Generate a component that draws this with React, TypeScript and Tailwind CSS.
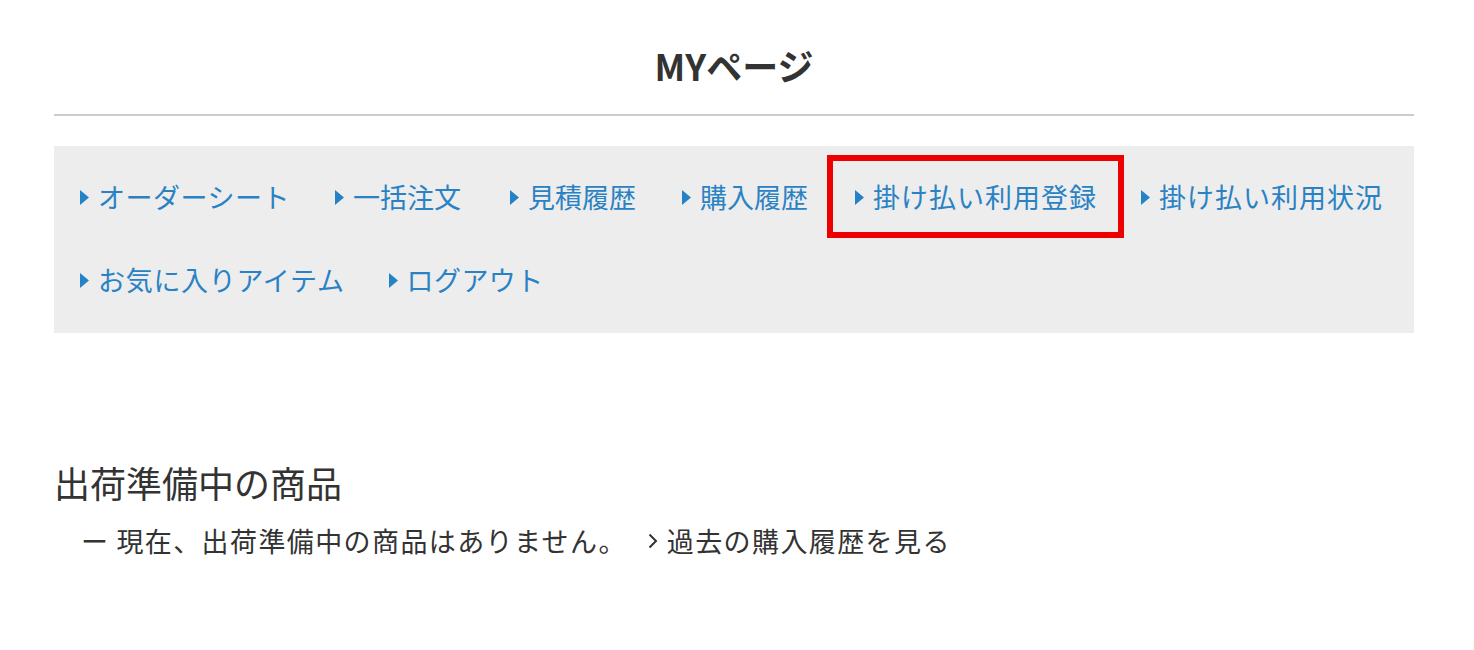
import React from "react";

const items: { t: string; cls: string }[] = [
  { t: "オーダーシート", cls: "mr-[45px] tracking-[0.5px]" },
  { t: "一括注文", cls: "mr-[49px]" },
  { t: "見積履歴", cls: "mr-[46px]" },
  { t: "購入履歴", cls: "mr-[47px]" },
  { t: "掛け払い利用登録", cls: "mr-[44px] tracking-[1px]" },
  { t: "掛け払い利用状況", cls: "mr-0 tracking-[1px]" },
  { t: "お気に入りアイテム", cls: "mr-[44px] tracking-[0.7px]" },
  { t: "ログアウト", cls: "mr-[47px] tracking-[0.4px]" },
];

function Tri() {
  return (
    <svg width="9" height="15" viewBox="0 0 9 15" className="shrink-0">
      <path d="M0 0 L9 7.5 L0 15 Z" fill="#2383c6" />
    </svg>
  );
}

export default function App() {
  return (
    <div
      className="h-[650px] overflow-hidden bg-white text-[#333]"
      style={{ fontFamily: '"Noto Sans CJK JP", "Noto Sans", sans-serif' }}
    >
      <div className="ml-[54px] w-[1360px] pt-[40px]">
        <h1 className="text-center text-[36px] font-bold leading-[50px] text-[#333]">
          MYページ
        </h1>
        <div className="mt-[24px] h-[2px] bg-[#cccccc]" />
        <nav className="mt-[30px] flex flex-wrap gap-y-[43px] bg-[#ededed] pb-[33px] pl-[26px] pr-[6px] pt-[31px]">
          {items.map((it, i) => (
            <div
              key={it.t}
              className={
                "relative flex items-center gap-[9px] text-[27px] leading-[40px] text-[#2a82c4] " +
                it.cls
              }
            >
              <Tri />
              <span className="whitespace-nowrap">{it.t}</span>
              {i === 4 && (
                <div className="absolute -bottom-[21px] -left-[28px] -right-[27px] -top-[22px] border-[6px] border-[#ee0000]" />
              )}
            </div>
          ))}
        </nav>
        <h2 className="mt-[124px] text-[36px] font-normal leading-[50px] text-[#333]">
          出荷準備中の商品
        </h2>
        <div className="mt-[14px] flex items-center pl-[27px] text-[27px] leading-[40px] tracking-[1.4px] text-[#333]">
          <span className="whitespace-nowrap">ー</span>
          <span className="ml-[7px] whitespace-nowrap">現在、出荷準備中の商品はありません。</span>
          <svg width="10" height="16" viewBox="0 0 10 16" className="ml-[21px] shrink-0">
            <path d="M1.5 1.5 L8 8 L1.5 14.5" fill="none" stroke="#333" strokeWidth="2" />
          </svg>
          <span className="ml-[9px] whitespace-nowrap">過去の購入履歴を見る</span>
        </div>
      </div>
    </div>
  );
}
